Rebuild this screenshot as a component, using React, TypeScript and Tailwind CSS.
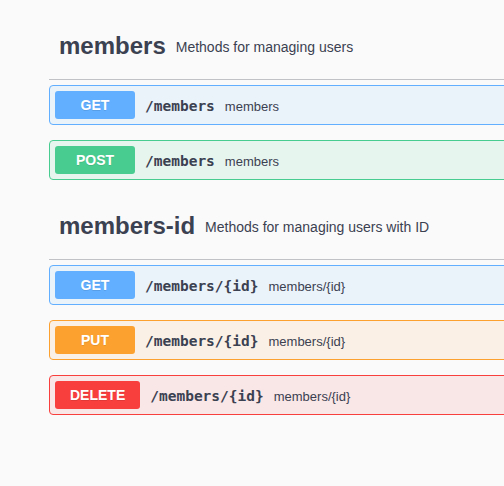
type Method = 'GET' | 'POST' | 'PUT' | 'DELETE';

type Operation = {
  method: Method;
  path: string;
  summary: string;
};

type TagSection = {
  name: string;
  description: string;
  operations: Operation[];
};

const methodStyles: Record<Method, { box: string; badge: string }> = {
  GET: { box: 'border-[#61affe] bg-[#61affe]/10', badge: 'bg-[#61affe]' },
  POST: { box: 'border-[#49cc90] bg-[#49cc90]/10', badge: 'bg-[#49cc90]' },
  PUT: { box: 'border-[#fca130] bg-[#fca130]/10', badge: 'bg-[#fca130]' },
  DELETE: { box: 'border-[#f93e3e] bg-[#f93e3e]/10', badge: 'bg-[#f93e3e]' },
};

const sections: TagSection[] = [
  {
    name: 'members',
    description: 'Methods for managing users',
    operations: [
      { method: 'GET', path: '/members', summary: 'members' },
      { method: 'POST', path: '/members', summary: 'members' },
    ],
  },
  {
    name: 'members-id',
    description: 'Methods for managing users with ID',
    operations: [
      { method: 'GET', path: '/members/{id}', summary: 'members/{id}' },
      { method: 'PUT', path: '/members/{id}', summary: 'members/{id}' },
      { method: 'DELETE', path: '/members/{id}', summary: 'members/{id}' },
    ],
  },
];

function OperationRow({ op }: { op: Operation }) {
  const style = methodStyles[op.method];
  return (
    <div className={`mb-[15px] flex items-center rounded-[4px] border p-[5px] ${style.box}`}>
      <span
        className={`flex h-[28px] min-w-[80px] items-center justify-center rounded-[3px] px-[15px] text-[14px] font-bold text-white [text-shadow:0_1px_0_rgba(0,0,0,0.1)] ${style.badge}`}
      >
        {op.method}
      </span>
      <span className="px-[10px] pt-[3px] font-['DejaVu_Sans_Mono',monospace] text-[14.5px] font-bold text-[#3b4151]">
        {op.path}
      </span>
      <span className="pt-[3px] text-[13px] text-[#3b4151]">{op.summary}</span>
    </div>
  );
}

function Section({ section, first }: { section: TagSection; first: boolean }) {
  return (
    <section className={first ? 'pt-[32px]' : 'pt-[17px]'}>
      <h4 className="mb-[5px] flex items-center border-b border-[#3b4151]/30 pb-[19px] pl-[10px] text-[#3b4151]">
        <span className="text-[24px] font-bold leading-[28px]">{section.name}</span>
        <small className="px-[10px] pt-[3px] text-[14px]">{section.description}</small>
      </h4>
      {section.operations.map((op, i) => (
        <OperationRow key={i} op={op} />
      ))}
    </section>
  );
}

export default function App() {
  return (
    <div className="h-[486px] w-[504px] overflow-hidden bg-[#fafafa] font-['Liberation_Sans',Arial,sans-serif]">
      <div className="ml-[49px] w-[600px]">
        {sections.map((s, i) => (
          <Section key={s.name} section={s} first={i === 0} />
        ))}
      </div>
    </div>
  );
}
